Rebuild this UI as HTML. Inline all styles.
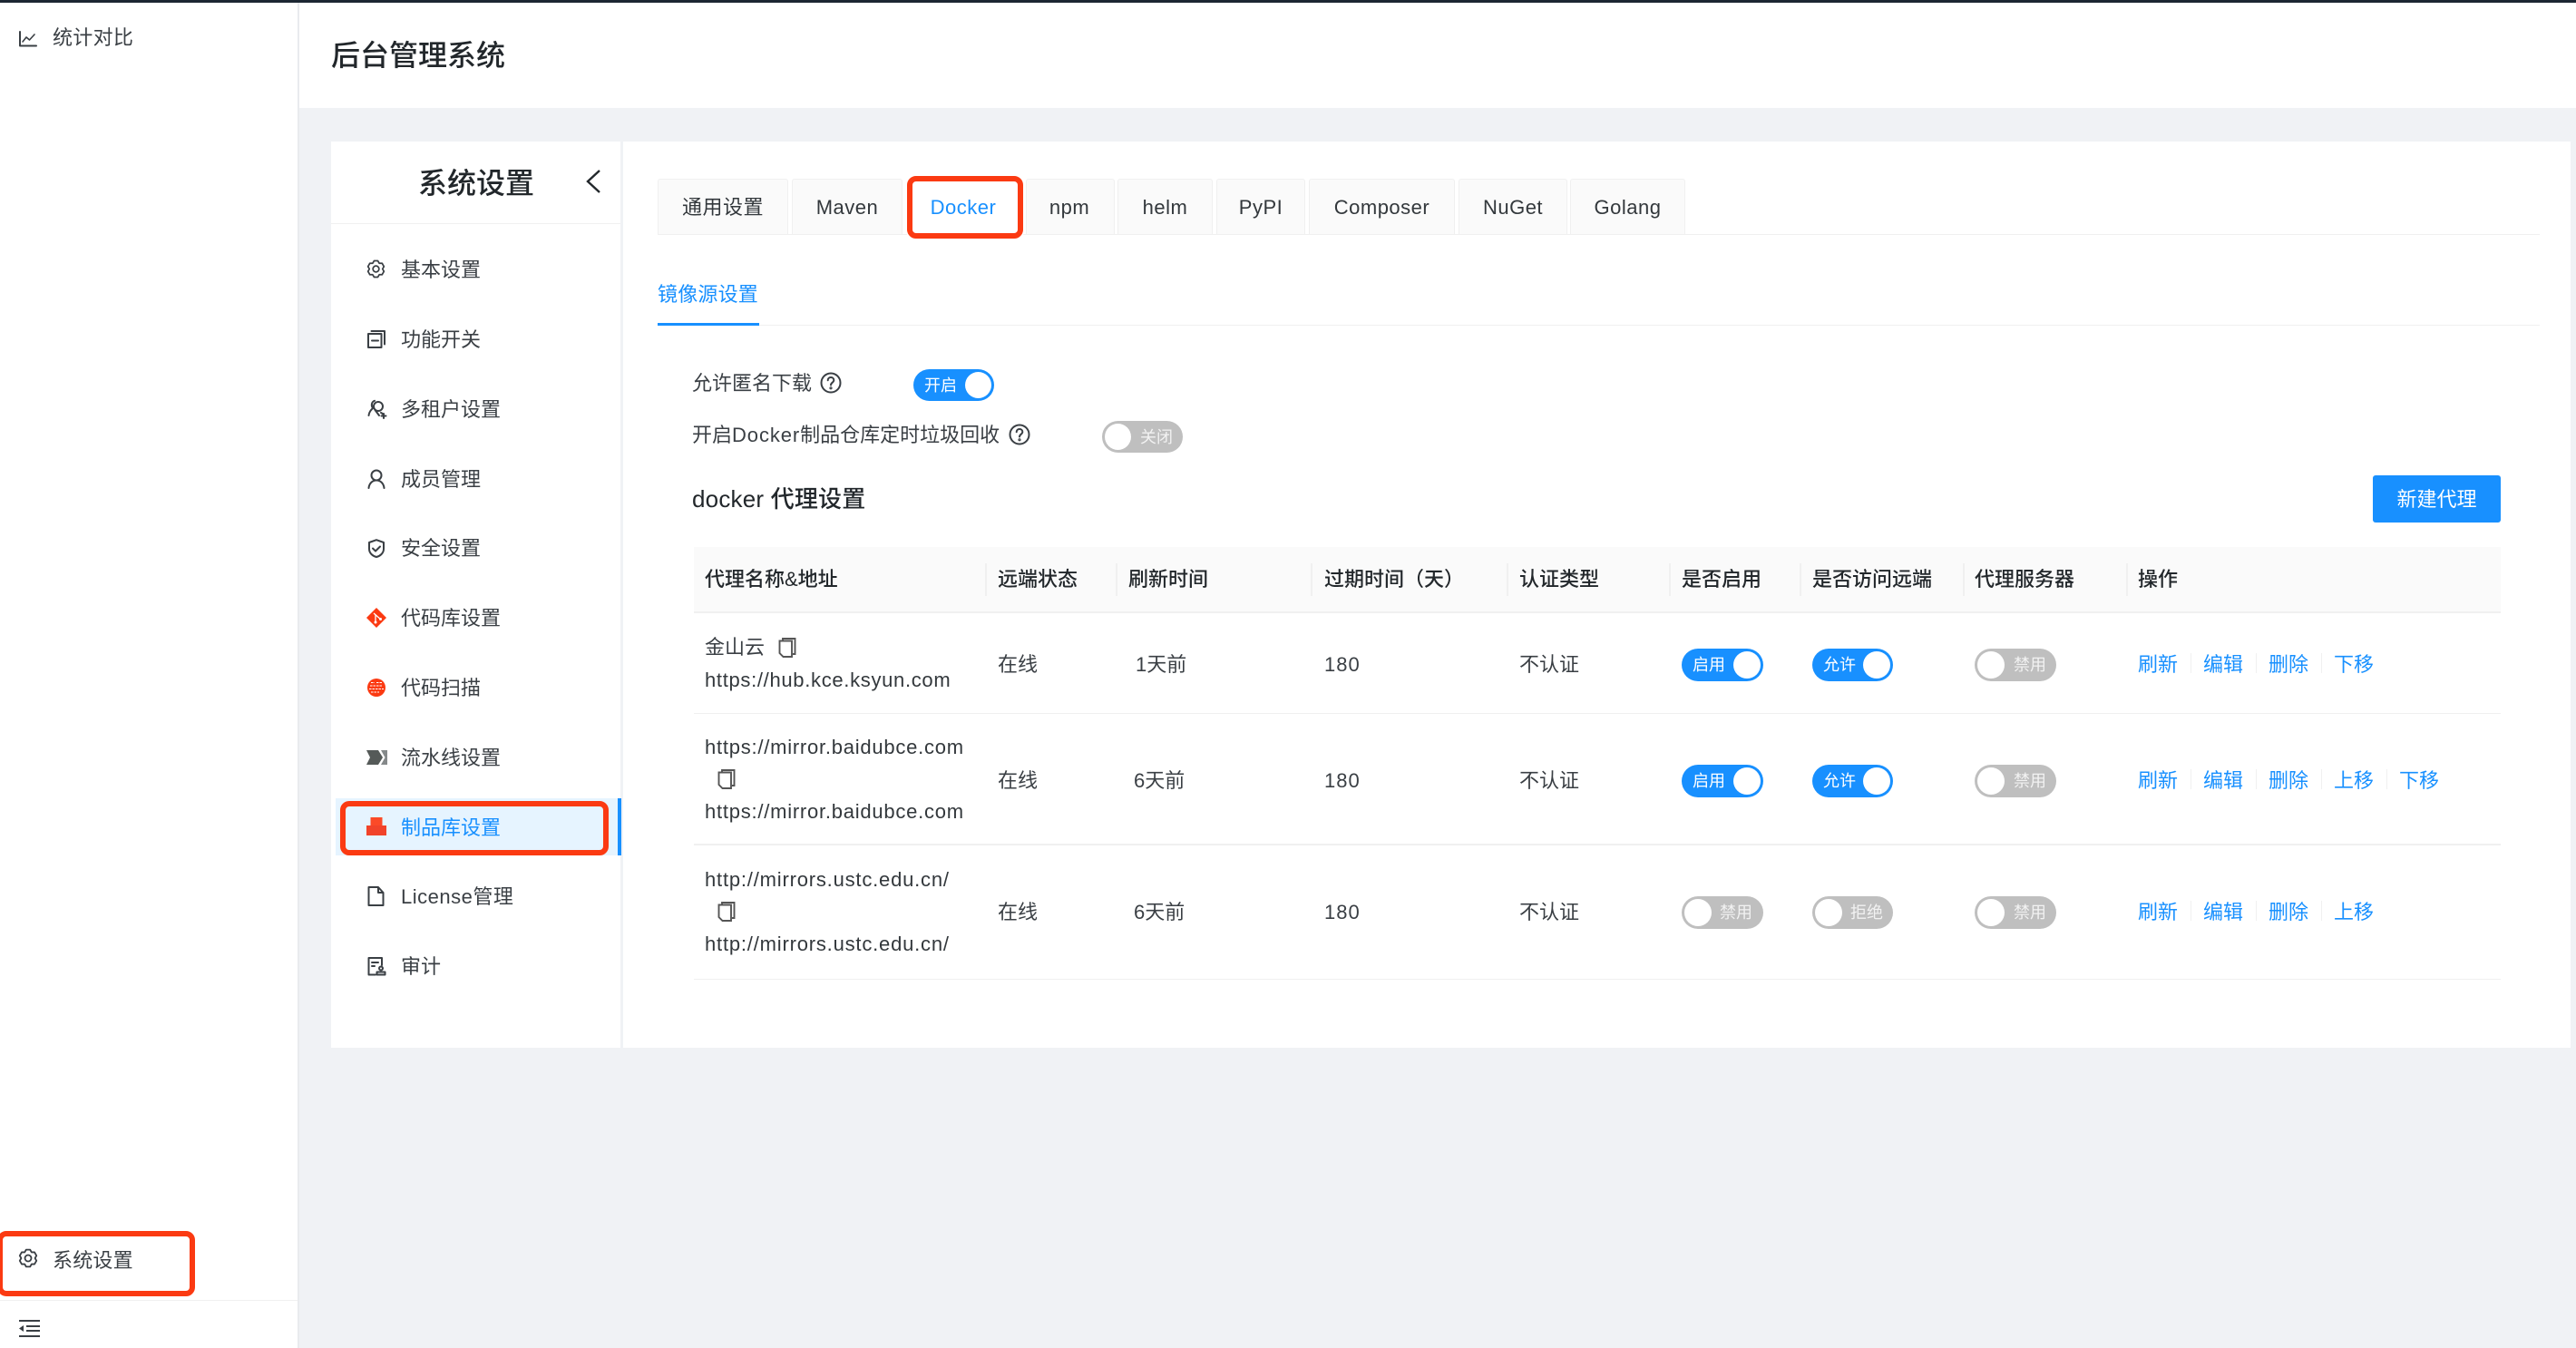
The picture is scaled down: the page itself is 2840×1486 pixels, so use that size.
<!DOCTYPE html>
<html lang="zh-CN"><head><meta charset="utf-8"><title>后台管理系统</title>
<style>
html,body{margin:0;padding:0;width:2840px;height:1486px;overflow:hidden;background:#f0f2f5}
body{position:relative;font-family:"Liberation Sans","Noto Sans CJK SC",sans-serif;font-size:22px;color:#3a3f44}
div,span,svg{position:absolute;box-sizing:border-box}
.t{line-height:30px;height:30px;white-space:nowrap;margin-top:1px}
.m{font-weight:500;color:#22272b}
.u{letter-spacing:.76px;color:#33383c;margin-top:0}
.tab{top:197px;height:62px;background:#fafafa;border:1px solid #f0f0f0;border-radius:3px 3px 0 0;line-height:62px;text-align:center;color:#33383c;letter-spacing:.5px}
.a,.tab.a{color:#1890ff}
.sw{width:90px;height:36px;border-radius:18px;background:#1890ff;color:#fff;font-size:18px;line-height:36px}
.sw.off{background:#bfbfbf;color:#f2f2f2}
.sw b{position:absolute;top:3px;right:3px;width:30px;height:30px;border-radius:50%;background:#fff}
.sw.off b{left:3px;right:auto}
.sw span{left:12px;top:0;white-space:nowrap}
.sw.off span{left:auto;right:11px}
.s{top:621px;width:2px;height:36px;background:#f0f0f0}
.d{width:1px;height:22px;background:#f0f0f0}
.red{border:6px solid #fb3a12;border-radius:10px}
.i{fill:none;stroke:#3a3f44;stroke-width:2;stroke-linejoin:round;stroke-linecap:round}
.n{letter-spacing:1px}
.l{position:static;letter-spacing:.9px}
</style></head><body>

<!-- sidebar -->
<div style="left:0;top:3px;width:328px;height:1483px;background:#fff"></div>
<div style="left:328px;top:3px;width:2px;height:1483px;background:#e9ebee"></div>
<svg class="i" style="left:21px;top:33px" width="20" height="19" viewBox="0 0 20 19"><path d="M1 2V17.500H19"/><path d="M4 13L8 8l3.500 3L17 5" stroke-width="1.600"/></svg>
<div class="t" style="left:58px;top:26px;letter-spacing:.3px">统计对比</div>
<div class="t" style="left:58px;top:1374px;letter-spacing:.2px">系统设置</div>
<svg class="i" style="left:20px;top:1376px" width="22" height="22" viewBox="0 0 24 24"><polygon points="14.360,1.770 9.640,1.770 7.850,4.810 4.320,4.840 1.960,8.930 3.700,12 1.960,15.070 4.320,19.160 7.850,19.190 9.640,22.230 14.360,22.230 16.150,19.190 19.680,19.160 22.040,15.070 20.300,12 22.040,8.930 19.680,4.840 16.150,4.810"/><circle cx="12" cy="12" r="3.800"/></svg>
<div style="left:0;top:1433px;width:328px;height:1px;background:#f0f0f0"></div>
<svg style="left:21px;top:1454px" width="23" height="21" viewBox="0 0 23 21"><g fill="#3a3f44"><rect y="1" width="23" height="2"/><rect x="8" y="7" width="15" height="2"/><rect x="8" y="12" width="15" height="2"/><rect y="18" width="23" height="2"/><path d="M0 10.500L5 7v7z"/></g></svg>
<div class="red" style="left:-3px;top:1357px;width:218px;height:72px"></div>

<!-- top bar & header -->
<div style="left:330px;top:3px;width:2510px;height:116px;background:#fff"></div>
<div style="left:0;top:0;width:2840px;height:3px;background:#1c2733"></div>
<div class="t m" style="left:365px;top:41px;margin:0;font-size:32px;line-height:40px;height:40px;font-weight:500;color:#22272b">后台管理系统</div>

<!-- settings menu panel -->
<div style="left:365px;top:156px;width:319px;height:999px;background:#fff"></div>
<div style="left:365px;top:246px;width:319px;height:1px;background:#f0f0f0"></div>
<div class="t" style="left:461px;top:181px;margin-top:1px;font-size:32px;line-height:40px;height:40px;font-weight:500;color:#22272b">系统设置</div>
<svg style="left:644px;top:186px" width="20" height="28" viewBox="0 0 20 28"><path d="M17 2L4 14l13 12" fill="none" stroke="#22272b" stroke-width="2.400"/></svg>

<div style="left:370px;top:880px;width:315px;height:63px;background:#e6f4ff"></div>
<div style="left:681px;top:880px;width:4px;height:63px;background:#1890ff"></div>
<div class="red" style="left:375px;top:883px;width:296px;height:60px"></div>

<svg class="i" style="left:404px;top:286px" width="21" height="21" viewBox="0 0 24 24"><polygon points="14.360,1.770 9.640,1.770 7.850,4.810 4.320,4.840 1.960,8.930 3.700,12 1.960,15.070 4.320,19.160 7.850,19.190 9.640,22.230 14.360,22.230 16.150,19.190 19.680,19.160 22.040,15.070 20.300,12 22.040,8.930 19.680,4.840 16.150,4.810"/><circle cx="12" cy="12" r="3.800"/></svg>
<div class="t" style="left:442px;top:282px">基本设置</div>

<svg class="i" style="left:405px;top:364px" width="20" height="20" viewBox="0 0 20 20"><rect x="1" y="4" width="14.500" height="15"/><path d="M4.500 1H19V15.500"/><path d="M5 11.500h7"/></svg>
<div class="t" style="left:442px;top:359px">功能开关</div>

<svg class="i" style="left:405px;top:440px" width="22" height="22" viewBox="0 0 22 22" stroke-width="1.700"><circle cx="12" cy="8" r="5"/><path d="M8 1.800C4.500 3 4 7 6 10c-2 2-4 4-4.500 8"/><path d="M8.500 12L13 18"/><path d="M15 15c1.500.5 2 1 2.500 2M18 16v5M15.500 18.500h5"/></svg>
<div class="t" style="left:442px;top:436px">多租户设置</div>

<svg class="i" style="left:405px;top:517px" width="20" height="22" viewBox="0 0 20 22"><circle cx="10" cy="7" r="5.500"/><path d="M1.500 21c.5-5 4-8.500 8.500-8.500s8 3.500 8.500 8.500"/></svg>
<div class="t" style="left:442px;top:513px">成员管理</div>

<svg class="i" style="left:405px;top:594px" width="20" height="21" viewBox="0 0 20 21"><path d="M10 1.200l8 2.800v7c0 5-4 8-8 9-4-1-8-4-8-9V4z"/><path d="M6 10.500l3 3 5-5"/></svg>
<div class="t" style="left:442px;top:589px">安全设置</div>

<svg style="left:404px;top:670px" width="22" height="22" viewBox="0 0 22 22"><path d="M11 0l11 11-11 11L0 11z" fill="#fb3a12"/><path d="M8 6l8 7M10 8v8" stroke="#fff" stroke-width="1.300" fill="none"/><circle cx="10" cy="16" r="1.500" fill="#fff"/><circle cx="15.500" cy="12.500" r="1.500" fill="#fff"/></svg>
<div class="t" style="left:442px;top:666px">代码库设置</div>

<svg style="left:405px;top:748px" width="20" height="20" viewBox="0 0 20 20"><circle cx="10" cy="10" r="10" fill="#fb3a12"/><path d="M4 4.500h4M10 4.500h6M3 8h14M2 11.500h16M4 15h9" stroke="#fff" stroke-width="1.100" stroke-dasharray="2.500 1" fill="none"/></svg>
<div class="t" style="left:442px;top:743px">代码扫描</div>

<svg style="left:404px;top:827px" width="23" height="16" viewBox="0 0 23 16"><path d="M0 0h13l5 8-5 8H0l4-8z" fill="#555a58"/><path d="M16 0h7v16h-7l4.500-8z" fill="#85898a"/></svg>
<div class="t" style="left:442px;top:820px">流水线设置</div>

<svg style="left:404px;top:901px" width="22" height="20" viewBox="0 0 22 20"><path d="M4.500 0h13v9h-13z" fill="#fb4a28"/><path d="M0 9h22v11H0z" fill="#f1432a"/></svg>
<div class="t a" style="left:442px;top:897px">制品库设置</div>

<svg class="i" style="left:405px;top:977px" width="19" height="22" viewBox="0 0 19 22"><path d="M1.500 1H12l5.500 6v14H1.500z"/><path d="M12 1.500V7h5"/></svg>
<div class="t" style="left:442px;top:973px;letter-spacing:.5px">License管理</div>

<svg class="i" style="left:405px;top:1055px" width="21" height="21" viewBox="0 0 21 21" stroke-width="1.800"><path d="M9 19.500H1.500V1H16v8"/><path d="M5 6h7M5 10h3"/><circle cx="15" cy="12.500" r="2"/><path d="M10.500 19.500h9v-3h-9z"/></svg>
<div class="t" style="left:442px;top:1050px">审计</div>

<!-- content panel -->
<div style="left:687px;top:156px;width:2147px;height:999px;background:#fff"></div>

<div style="left:725px;top:258px;width:2075px;height:1px;background:#f0f0f0"></div>
<div class="tab" style="left:725px;width:144px">通用设置</div>
<div class="tab" style="left:873px;width:122px">Maven</div>
<div class="tab a" style="left:1000px;width:128px;background:#fff;border-color:#fff;height:63px;padding-right:4px">Docker</div>
<div class="tab" style="left:1131px;width:98px;padding-right:2px">npm</div>
<div class="tab" style="left:1232px;width:105px">helm</div>
<div class="tab" style="left:1341px;width:98px">PyPI</div>
<div class="tab" style="left:1443px;width:161px">Composer</div>
<div class="tab" style="left:1608px;width:120px">NuGet</div>
<div class="tab" style="left:1731px;width:127px">Golang</div>
<div class="red" style="left:1000px;top:194px;width:128px;height:69px"></div>

<div class="t a" style="left:725px;top:309px;letter-spacing:.2px">镜像源设置</div>
<div style="left:725px;top:358px;width:2075px;height:1px;background:#f0f0f0"></div>
<div style="left:725px;top:356px;width:112px;height:3px;background:#1890ff"></div>

<div class="t" style="left:763px;top:407px">允许匿名下载</div>
<svg class="i" style="left:904px;top:410px" width="24" height="24" viewBox="0 0 24 24" stroke-width="1.800"><circle cx="12" cy="12" r="10.500"/><path d="M8.700 9.300c0-2 1.500-3.300 3.300-3.300s3.300 1.300 3.300 3.100c0 2.500-3.300 2.700-3.300 5.400"/><circle cx="12" cy="17.800" r=".6"/></svg>
<div class="sw" style="left:1007px;top:407px;width:89px;height:35px"><span>开启</span><b style="width:29px;height:29px"></b></div>

<div class="t" style="left:763px;top:464px">开启<span class="l">Docker</span>制品仓库定时垃圾回收</div>
<svg class="i" style="left:1112px;top:467px" width="24" height="24" viewBox="0 0 24 24" stroke-width="1.800"><circle cx="12" cy="12" r="10.500"/><path d="M8.700 9.300c0-2 1.500-3.300 3.300-3.300s3.300 1.300 3.300 3.100c0 2.500-3.300 2.700-3.300 5.400"/><circle cx="12" cy="17.800" r=".6"/></svg>
<div class="sw off" style="left:1215px;top:464px;width:89px;height:35px"><span>关闭</span><b style="width:29px;height:29px"></b></div>

<div class="t" style="left:763px;top:535px;margin:0;font-size:26px;font-weight:500;color:#22272b;letter-spacing:.2px">docker 代理设置</div>
<div style="left:2616px;top:524px;width:141px;height:52px;background:#1890ff;border-radius:3px;color:#fff;text-align:center;line-height:54px">新建代理</div>

<!-- table -->
<div style="left:765px;top:603px;width:1992px;height:73px;background:#fafafa;border-bottom:2px solid #f0f0f0"></div>
<div class="s" style="left:1086px"></div><div class="s" style="left:1230px"></div><div class="s" style="left:1445px"></div><div class="s" style="left:1661px"></div><div class="s" style="left:1840px"></div><div class="s" style="left:1984px"></div><div class="s" style="left:2164px"></div><div class="s" style="left:2344px"></div>
<div class="t m" style="left:777px;top:623px">代理名称&amp;地址</div>
<div class="t m" style="left:1100px;top:623px">远端状态</div>
<div class="t m" style="left:1244px;top:623px">刷新时间</div>
<div class="t m" style="left:1460px;top:623px">过期时间（天）</div>
<div class="t m" style="left:1675px;top:623px">认证类型</div>
<div class="t m" style="left:1854px;top:623px">是否启用</div>
<div class="t m" style="left:1998px;top:623px">是否访问远端</div>
<div class="t m" style="left:2177px;top:623px">代理服务器</div>
<div class="t m" style="left:2357px;top:623px">操作</div>

<div style="left:765px;top:786px;width:1992px;height:1px;background:#f0f0f0"></div>
<div style="left:765px;top:930px;width:1992px;height:2px;background:#f0f0f0"></div>
<div style="left:765px;top:1079px;width:1992px;height:1px;background:#f0f0f0"></div>

<!-- row 1 -->
<div class="t" style="left:777px;top:698px">金山云</div>
<svg style="left:858px;top:703px" width="20" height="22" viewBox="0 0 20 22"><path d="M5 3.500V1h13.500v17H16M1.500 3.500H15V21H5.500l-4-4z" fill="none" stroke="#555" stroke-width="1.900"/></svg>
<div class="t u" style="left:777px;top:735px;letter-spacing:.68px">https://hub.kce.ksyun.com</div>
<div class="t" style="left:1100px;top:717px">在线</div>
<div class="t" style="left:1252px;top:717px">1天前</div>
<div class="t n" style="left:1460px;top:717px">180</div>
<div class="t" style="left:1675px;top:717px">不认证</div>
<div class="sw" style="left:1854px;top:715px"><span>启用</span><b></b></div>
<div class="sw" style="left:1998px;top:715px;width:89px"><span>允许</span><b></b></div>
<div class="sw off" style="left:2177px;top:715px"><span>禁用</span><b></b></div>
<div class="t a" style="left:2357px;top:717px">刷新</div><div class="d" style="left:2415px;top:720px"></div>
<div class="t a" style="left:2429px;top:717px">编辑</div><div class="d" style="left:2487px;top:720px"></div>
<div class="t a" style="left:2501px;top:717px">删除</div><div class="d" style="left:2559px;top:720px"></div>
<div class="t a" style="left:2573px;top:717px">下移</div>

<!-- row 2 -->
<div class="t u" style="left:777px;top:809px">https://mirror.baidubce.com</div>
<svg style="left:791px;top:848px" width="20" height="22" viewBox="0 0 20 22"><path d="M5 3.500V1h13.500v17H16M1.500 3.500H15V21H5.500l-4-4z" fill="none" stroke="#555" stroke-width="1.900"/></svg>
<div class="t u" style="left:777px;top:880px">https://mirror.baidubce.com</div>
<div class="t" style="left:1100px;top:845px">在线</div>
<div class="t" style="left:1250px;top:845px">6天前</div>
<div class="t n" style="left:1460px;top:845px">180</div>
<div class="t" style="left:1675px;top:845px">不认证</div>
<div class="sw" style="left:1854px;top:843px"><span>启用</span><b></b></div>
<div class="sw" style="left:1998px;top:843px;width:89px"><span>允许</span><b></b></div>
<div class="sw off" style="left:2177px;top:843px"><span>禁用</span><b></b></div>
<div class="t a" style="left:2357px;top:845px">刷新</div><div class="d" style="left:2415px;top:848px"></div>
<div class="t a" style="left:2429px;top:845px">编辑</div><div class="d" style="left:2487px;top:848px"></div>
<div class="t a" style="left:2501px;top:845px">删除</div><div class="d" style="left:2559px;top:848px"></div>
<div class="t a" style="left:2573px;top:845px">上移</div><div class="d" style="left:2631px;top:848px"></div>
<div class="t a" style="left:2645px;top:845px">下移</div>

<!-- row 3 -->
<div class="t u" style="left:777px;top:955px;letter-spacing:.8px">http://mirrors.ustc.edu.cn/</div>
<svg style="left:791px;top:994px" width="20" height="22" viewBox="0 0 20 22"><path d="M5 3.500V1h13.500v17H16M1.500 3.500H15V21H5.500l-4-4z" fill="none" stroke="#555" stroke-width="1.900"/></svg>
<div class="t u" style="left:777px;top:1026px;letter-spacing:.8px">http://mirrors.ustc.edu.cn/</div>
<div class="t" style="left:1100px;top:990px">在线</div>
<div class="t" style="left:1250px;top:990px">6天前</div>
<div class="t n" style="left:1460px;top:990px">180</div>
<div class="t" style="left:1675px;top:990px">不认证</div>
<div class="sw off" style="left:1854px;top:988px"><span style="right:12px">禁用</span><b></b></div>
<div class="sw off" style="left:1998px;top:988px;width:89px"><span>拒绝</span><b></b></div>
<div class="sw off" style="left:2177px;top:988px"><span>禁用</span><b></b></div>
<div class="t a" style="left:2357px;top:990px">刷新</div><div class="d" style="left:2415px;top:993px"></div>
<div class="t a" style="left:2429px;top:990px">编辑</div><div class="d" style="left:2487px;top:993px"></div>
<div class="t a" style="left:2501px;top:990px">删除</div><div class="d" style="left:2559px;top:993px"></div>
<div class="t a" style="left:2573px;top:990px">上移</div>

</body></html>
